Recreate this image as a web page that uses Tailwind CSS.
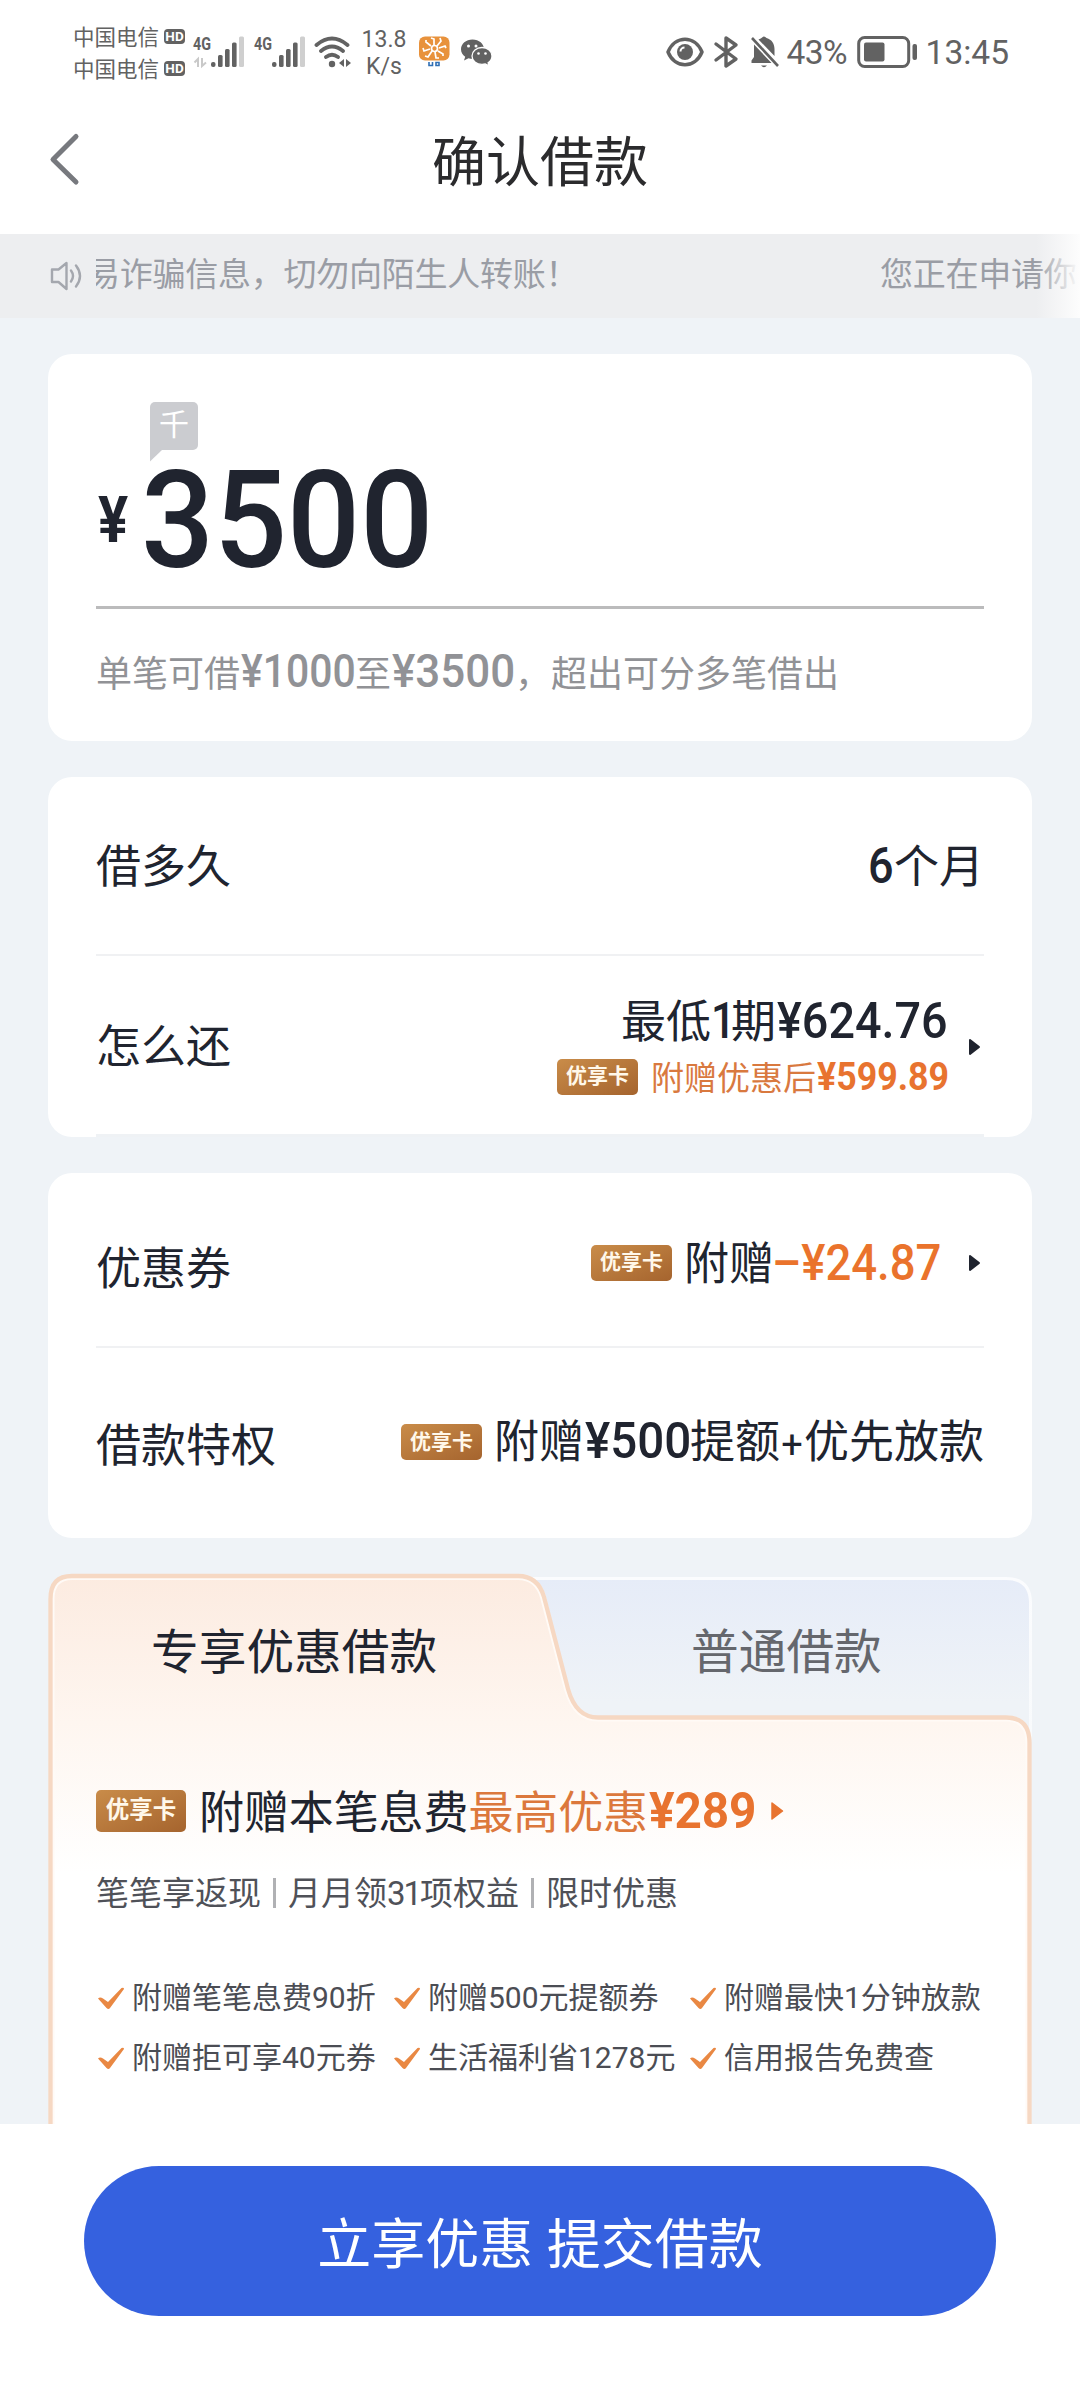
<!DOCTYPE html>
<html lang="zh-CN">
<head>
<meta charset="utf-8">
<title>确认借款</title>
<script src="https://cdn.jsdelivr.net/npm/@tailwindcss/browser@4"></script>
</head>
<body class="w-[1080px] h-[2400px] overflow-hidden bg-[#eff3f7] font-[Roboto,'Noto_Sans_CJK_SC',sans-serif] text-[#20242f] leading-none whitespace-nowrap flex flex-col">

<!-- status bar -->
<div class="h-[100px] shrink-0 bg-white flex items-start text-[#626262]">
  <div class="ml-[73px] mt-[22px] w-[113px] flex flex-col gap-[1px]">
    <div class="flex items-center h-[31px] text-[21.5px]">中国电信<svg class="ml-[5px] -mt-[2px]" width="22" height="15"><rect width="21" height="15" rx="4" fill="#626262"/><text x="10.5" y="12.3" text-anchor="middle" font-family="Roboto" font-weight="700" font-size="13.5" fill="#fff">HD</text></svg></div>
    <div class="flex items-center h-[31px] text-[21.5px]">中国电信<svg class="ml-[5px] -mt-[2px]" width="22" height="15"><rect width="21" height="15" rx="4" fill="#626262"/><text x="10.5" y="12.3" text-anchor="middle" font-family="Roboto" font-weight="700" font-size="13.5" fill="#fff">HD</text></svg></div>
  </div>
  <svg class="ml-[6px] mt-[34px]" width="56" height="36" fill="#626262">
    <text x="1" y="16" font-family="Roboto" font-weight="700" font-size="17.5" textLength="18" lengthAdjust="spacingAndGlyphs">4G</text>
    <path d="M6 33V25L2.500 28.500M10 24V32L14 28.500" stroke="#c9c9c9" stroke-width="2" fill="none"/>
    <rect x="19" y="28" width="4.500" height="5" rx="2"/><rect x="26" y="21" width="4.600" height="12" rx="1.500"/><rect x="33" y="15" width="4.600" height="18" rx="1.500"/><rect x="40" y="8.500" width="4.600" height="24.500" rx="1.500"/><rect x="47" y="2.500" width="5" height="30.500" rx="1.500" fill="#cfcfcf"/>
  </svg>
  <svg class="ml-[5px] mt-[34px]" width="56" height="36" fill="#626262">
    <text x="1" y="16" font-family="Roboto" font-weight="700" font-size="17.5" textLength="18" lengthAdjust="spacingAndGlyphs">4G</text>
    <rect x="19" y="28" width="4.500" height="5" rx="2"/><rect x="26" y="21" width="4.600" height="12" rx="1.500"/><rect x="33" y="15" width="4.600" height="18" rx="1.500"/><rect x="40" y="8.500" width="4.600" height="24.500" rx="1.500"/><rect x="47" y="2.500" width="5" height="30.500" rx="1.500" fill="#cfcfcf"/>
  </svg>
  <svg class="ml-[4px] mt-[34px]" width="40" height="36" fill="none" stroke="#626262" stroke-width="3.800" stroke-linecap="round">
    <path d="M3.500 11Q19 -2 34.500 11M8 17Q19 8 30 17M13 23Q19 18.500 25 23"/>
    <circle cx="19" cy="30" r="3.200" fill="#626262" stroke="none"/>
    <path d="M26 29l5-4v8zM38 29l-5-4v8z" fill="#626262" stroke="none"/>
  </svg>
  <div class="ml-[6px] mt-[26px] w-[50px] text-center text-[23px] leading-[27px]">13.8<br>K/s</div>
  <svg class="ml-[10px] mt-[36px]" width="32" height="34">
    <rect x="0" y="0.500" width="30.500" height="24" rx="6" fill="#e8923c"/>
    <g stroke="#fff" stroke-width="1.700" fill="none"><path d="M15 9V3l-3-1M18 10l4-5-1-3M20 12l6-2 1 2M19 15l5 3v2M16 16l1 6h3M13 15l-4 6-3-1M11 13l-6 2-1-3M12 10L7 6V4"/><circle cx="15.500" cy="12.500" r="3"/></g>
    <path d="M10 26v3.500h3.500v-3.500M17 26.500h3v3h-3z" stroke="#2f6fb5" stroke-width="1.600" fill="none"/>
  </svg>
  <svg class="ml-[9px] mt-[38px]" width="34" height="30" fill="#626262">
    <path d="M12.500 1.500C6 1.500 1 5.800 1 11.300c0 3.200 1.600 5.700 4.200 7.500L4 22.500l4.500-2.300c1.300.4 2.600.5 4 .5C19 20.700 24 16.600 24 11.200S19 1.500 12.500 1.500z"/>
    <path d="M22 9.500c-5.600 0-10 3.700-10 8.400s4.400 8.500 10 8.500c1.200 0 2.300-.2 3.300-.5l3.700 2-.9-3.200c2.300-1.600 3.900-4 3.900-6.800 0-4.700-4.400-8.400-10-8.400z" stroke="#fff" stroke-width="1.300"/>
    <g fill="#fff"><circle cx="8.500" cy="8" r="1.500"/><circle cx="16" cy="8" r="1.500"/><circle cx="18.500" cy="15.500" r="1.300"/><circle cx="25.500" cy="15.500" r="1.300"/></g>
  </svg>
  <div class="ml-auto mr-[71px] mt-[34px] h-[36px] flex items-center">
    <svg width="38" height="32" fill="none" stroke="#626262" stroke-width="3.500"><path d="M2 16C9 -1 29 -1 36 16C29 33 9 33 2 16z" stroke-linejoin="round"/><circle cx="19" cy="16" r="8" fill="#626262" stroke="none"/><path d="M14.500 15.500a4 4 0 0 1 4-4" stroke="#fff" stroke-width="2"/></svg>
    <svg class="ml-[9px]" width="28" height="34" fill="none" stroke="#626262" stroke-width="3.400" stroke-linejoin="round" stroke-linecap="round"><path d="M3 9l20 15-10 7V3l10 7L3 25"/></svg>
    <svg class="ml-[8px]" width="32" height="34" fill="#626262"><path d="M3 3L29 31" stroke="#626262" stroke-width="2.600"/><path d="M9.500 4.500Q11.500 3.500 12.500 3Q15 0 17.500 3C23 4.500 25.500 9 25.500 14v7zM5 9.500L22.500 28H2.500v-2.500L5 22z"/><path d="M12 30.500h6q-3 3.500-6 0z"/></svg>
    <div class="ml-[6px] w-[66px] text-[33.5px] tracking-[-0.6px] pt-[2px]">43%</div>
    <svg class="ml-[4px]" width="64" height="34"><rect x="1.700" y="2.500" width="50" height="29" rx="6" fill="none" stroke="#626262" stroke-width="3"/><rect x="7" y="7.500" width="20.500" height="19" rx="2" fill="#626262"/><rect x="55.500" y="9" width="4.500" height="16" rx="2" fill="#626262"/></svg>
    <div class="ml-[5px] text-[33.5px] pt-[2px]">13:45</div>
  </div>
</div>

<!-- title bar -->
<div class="h-[134px] shrink-0 bg-white grid grid-cols-[1fr_auto_1fr]">
  <svg class="ml-[48px] mt-[32px]" width="34" height="56" fill="none" stroke="#77797e" stroke-width="5" stroke-linecap="round" stroke-linejoin="round"><path d="M28 4.500L5 27.500L28 50"/></svg>
  <div class="mt-[37px] text-[54px] text-[#2b2b2d]">确认借款</div>
</div>

<!-- scrolling notice -->
<div class="relative h-[84px] shrink-0 bg-[#edeef0] flex items-start text-[33px] text-[#9a9da5]">
  <svg class="ml-[50px] mt-[26px] w-[34px] shrink-0" width="34" height="32" fill="none" stroke="#a4a7ae" stroke-width="2.400" stroke-linejoin="round" stroke-linecap="round"><path d="M2 9.500h6.500L16.500 3v26l-8-7H2zM21 10.500q4 5.500 0 11M26 5.500q8 10.500 0 21"/></svg>
  <div class="ml-[12px] mt-[24px] w-[984px] h-[40px] overflow-hidden flex">
    <span class="-ml-[9px] w-[793px] shrink-0 tracking-[-0.25px]">易诈骗信息，切勿向陌生人转账！</span><span class="tracking-[-0.25px]">您正在申请你</span>
  </div>
  <div class="absolute right-0 top-0 h-full w-[44px] bg-linear-to-r from-[#fdfdfd]/0 to-[#fdfdfd]"></div>
</div>

<!-- amount -->
<section class="mx-[48px] mt-[36px] h-[387px] shrink-0 rounded-[24px] bg-white px-[48px] flex flex-col">
  <div class="ml-[54px] mt-[48px] relative w-[48px] h-[48px] rounded-[5px] rounded-bl-none bg-[#cbccd0] text-white text-[30px] text-center pt-[8px]">千
    <svg class="absolute left-0 top-[48px]" width="14" height="12"><path d="M0 0H12L0 11.500z" fill="#cbccd0"/></svg>
  </div>
  <div class="h-[156px] flex items-baseline font-medium">
    <span class="w-[45px] pl-[2px] pb-[25px]"><span class="inline-block origin-left scale-x-[.88] -translate-y-[25px] text-[64px] font-bold">¥</span></span>
    <span class="inline-block origin-left scale-x-[.945] text-[136px] leading-[142px]">3500</span>
  </div>
  <div class="h-[3px] bg-[#bbbbbc]"></div>
  <div class="mt-[38px] flex items-baseline text-[36px] text-[#919296]">单笔可借<span class="w-[115px] pl-[1px] text-[47px] font-medium"><span class="inline-block origin-left scale-x-[.87]">¥1000</span></span>至<span class="w-[124px] pl-[1px] text-[47px] font-medium"><span class="inline-block origin-left scale-x-[.935]">¥3500</span></span>，超出可分多笔借出</div>
</section>

<!-- term and repayment -->
<section class="mx-[48px] mt-[36px] h-[360px] shrink-0 rounded-[24px] bg-white px-[48px] text-[45px]">
  <div class="h-[179px] border-b-2 border-[#f0f1f3] flex items-center justify-between">
    <span class="pt-[3px]">借多久</span>
    <span class="flex items-baseline"><span class="w-[26px] text-[50px] font-medium"><span class="inline-block origin-left scale-x-[.9]">6</span></span>个月</span>
  </div>
  <div class="h-[181px] border-b-3 border-[#eff2f5] flex items-center">
    <span class="pt-[4px]">怎么还</span>
    <div class="ml-auto pt-[1px] flex flex-col items-end">
      <div class="flex items-baseline"><span>最低</span><span class="w-[20px] font-medium"><span class="inline-block origin-left scale-x-[.86] text-[50px]">1</span></span><span>期</span><span class="w-[171px] pl-[1px] text-[50px] font-medium"><span class="inline-block origin-left scale-x-[.935]">¥624.76</span></span></div>
      <div class="mt-[12px] flex items-center">
        <span class="mr-[13px] w-[81px] h-[36px] rounded-[5px] bg-linear-to-br from-[#c98c49] to-[#a5642e] text-[#fff8ea] text-[21px] font-bold flex items-center justify-center">优享卡</span>
        <span class="flex items-baseline text-[33px] text-[#d9793f]">附赠优惠后<span class="w-[131px] pl-[1px] text-[38px] font-bold text-[#e8732f]"><span class="inline-block origin-left scale-x-[.94]">¥599.89</span></span></span>
      </div>
    </div>
    <svg class="ml-[21px] mr-[3px] mt-[4px]" width="13" height="20"><path d="M2 3L11 10L2 17z" fill="#20242f" stroke="#20242f" stroke-width="2" stroke-linejoin="round"/></svg>
  </div>
</section>

<!-- coupon and privilege -->
<section class="mx-[48px] mt-[36px] h-[365px] shrink-0 rounded-[24px] bg-white px-[48px] text-[45px]">
  <div class="h-[175px] border-b-2 border-[#f0f1f3] flex items-center">
    <span class="mt-[19px]">优惠券</span>
    <span class="ml-auto mr-[12px] mt-[6px] w-[81px] h-[36px] rounded-[5px] bg-linear-to-br from-[#c98c49] to-[#a5642e] text-[#fff8ea] text-[21px] font-bold flex items-center justify-center">优享卡</span>
    <span class="mt-[6px] flex items-baseline">附赠<span class="w-[170px] text-[50px] font-medium text-[#ea732c]"><span class="inline-block origin-left scale-x-[.91] -translate-x-[2px]">–¥24.87</span></span></span>
    <svg class="mt-[6px] ml-[24px] mr-[3px]" width="13" height="20"><path d="M2 3L11 10L2 17z" fill="#20242f" stroke="#20242f" stroke-width="2" stroke-linejoin="round"/></svg>
  </div>
  <div class="h-[190px] flex items-center">
    <span class="pt-[6px]">借款特权</span>
    <span class="ml-auto mr-[12px] w-[81px] h-[36px] -mt-[2px] rounded-[5px] bg-linear-to-br from-[#c98c49] to-[#a5642e] text-[#fff8ea] text-[21px] font-bold flex items-center justify-center">优享卡</span>
    <span class="-mt-[4px] flex items-baseline">附赠<span class="w-[106px] pl-[1px] text-[50px] font-medium"><span class="inline-block origin-left scale-x-[.95]">¥500</span></span>提额<span class="w-[24px] inline-block text-center text-[38px]">+</span>优先放款</span>
  </div>
</section>

<!-- loan plan tabs -->
<section class="relative mx-[48px] mt-[35px] h-[551px] shrink-0">
  <svg class="absolute left-0 top-0" width="984" height="551">
    <defs>
      <linearGradient id="panel" x1="0" y1="0" x2="0" y2="300" gradientUnits="userSpaceOnUse"><stop offset="0" stop-color="#fcebe0"/><stop offset=".5" stop-color="#fef6f0"/><stop offset="1" stop-color="#ffffff"/></linearGradient>
      <linearGradient id="tab" x1="0" y1="6" x2="0" y2="130" gradientUnits="userSpaceOnUse"><stop offset="0" stop-color="#e6ecf8"/><stop offset="1" stop-color="#eff3f7"/></linearGradient>
      <linearGradient id="rim" x1="0" y1="6" x2="0" y2="160" gradientUnits="userSpaceOnUse"><stop offset="0" stop-color="#fbfcfe"/><stop offset="1" stop-color="#f8fafc"/></linearGradient>
      <clipPath id="inside"><path d="M2 560V26Q2 2 24 2H470Q492 2 498 24L520 116Q528 144 548 144H958Q982 144 982 170V560z"/></clipPath>
    </defs>
    <path d="M440 5.500H958Q982.500 5.500 982.500 30V165H440z" fill="url(#tab)" stroke="url(#rim)" stroke-width="3"/>
    <path d="M2.500 560V26Q2.500 3 24 3H470Q490 3 496 24L520 116Q528 144.500 550 144.500H958Q981.500 144.500 981.500 170V560z" fill="url(#panel)"/>
    <path d="M2.500 560V26Q2.500 3 24 3H470Q490 3 496 24L520 116Q528 144.500 550 144.500H958Q981.500 144.500 981.500 170V560" fill="none" stroke="#fffaf6" stroke-width="8" clip-path="url(#inside)"/>
    <path d="M2.500 560V26Q2.500 3 24 3H470Q490 3 496 24L520 116Q528 144.500 550 144.500H958Q981.500 144.500 981.500 170V560" fill="none" stroke="#f6d8c3" stroke-width="4.300"/>
  </svg>
  <div class="relative h-full flex flex-col">
    <div class="h-[144px] grid grid-cols-2 text-[47.700px]">
      <div class="pt-[57px] pl-[103px]">专享优惠借款</div>
      <div class="pt-[57px] pl-[151px] text-[#65676d]">普通借款</div>
    </div>
    <div class="mt-[71px] ml-[48px] h-[46px] flex items-center text-[45px]">
      <span class="mr-[13px] w-[90px] h-[42px] rounded-[5px] bg-linear-to-br from-[#c98c49] to-[#a5642e] text-[#fff8ea] text-[23.5px] font-bold flex items-center justify-center">优享卡</span>
      <span class="pt-[2px] flex items-baseline tracking-[-0.1px]">附赠本笔息费<span class="text-[#dc783c]">最高优惠</span><span class="w-[112px] pl-[1px] text-[50px] font-bold text-[#e8732f]"><span class="inline-block origin-left scale-x-[.955] -translate-y-[1px]">¥289</span></span></span>
      <svg class="ml-[10px]" width="15" height="22"><path d="M2 3L12.500 11L2 19z" fill="#e8732f" stroke="#e8732f" stroke-width="1.500" stroke-linejoin="round"/></svg>
    </div>
    <div class="mt-[42px] ml-[48px] h-[34px] flex items-center text-[33px] text-[#4f5158]">
      <span>笔笔享返现</span><i class="mx-[12px] w-[3px] h-[30px] bg-[#b0b1b4]"></i><span>月月领<span class="tracking-[-2px]">31</span>项权益</span><i class="mx-[12px] w-[3px] h-[30px] bg-[#b0b1b4]"></i><span>限时优惠</span>
    </div>
    <div class="mt-[73px] ml-[48px] grid grid-cols-[296px_296px_300px] gap-y-[30px] text-[30px] text-[#4b4d54]">
      <div class="flex items-center"><svg class="mr-[7px]" width="29" height="26"><path d="M2 13.500Q4 11.500 7 13.500L12 17L25.500 3Q28 2 28 4L14 23Q12.500 25 10.500 23z" fill="#e98843"/></svg>附赠笔笔息费90折</div>
      <div class="flex items-center"><svg class="mr-[7px]" width="29" height="26"><path d="M2 13.500Q4 11.500 7 13.500L12 17L25.500 3Q28 2 28 4L14 23Q12.500 25 10.500 23z" fill="#e98843"/></svg>附赠500元提额券</div>
      <div class="flex items-center"><svg class="mr-[7px]" width="29" height="26"><path d="M2 13.500Q4 11.500 7 13.500L12 17L25.500 3Q28 2 28 4L14 23Q12.500 25 10.500 23z" fill="#e98843"/></svg>附赠最快1分钟放款</div>
      <div class="flex items-center"><svg class="mr-[7px]" width="29" height="26"><path d="M2 13.500Q4 11.500 7 13.500L12 17L25.500 3Q28 2 28 4L14 23Q12.500 25 10.500 23z" fill="#e98843"/></svg>附赠拒可享40元券</div>
      <div class="flex items-center"><svg class="mr-[7px]" width="29" height="26"><path d="M2 13.500Q4 11.500 7 13.500L12 17L25.500 3Q28 2 28 4L14 23Q12.500 25 10.500 23z" fill="#e98843"/></svg>生活福利省1278元</div>
      <div class="flex items-center"><svg class="mr-[7px]" width="29" height="26"><path d="M2 13.500Q4 11.500 7 13.500L12 17L25.500 3Q28 2 28 4L14 23Q12.500 25 10.500 23z" fill="#e98843"/></svg>信用报告免费查</div>
    </div>
  </div>
</section>

<!-- submit -->
<div class="grow bg-white px-[84px] pt-[42px]">
  <button class="w-full h-[150px] rounded-full bg-[#3561df] text-white text-[54px] flex items-center justify-center pt-[10px]">立享优惠 提交借款</button>
</div>
</body>
</html>
